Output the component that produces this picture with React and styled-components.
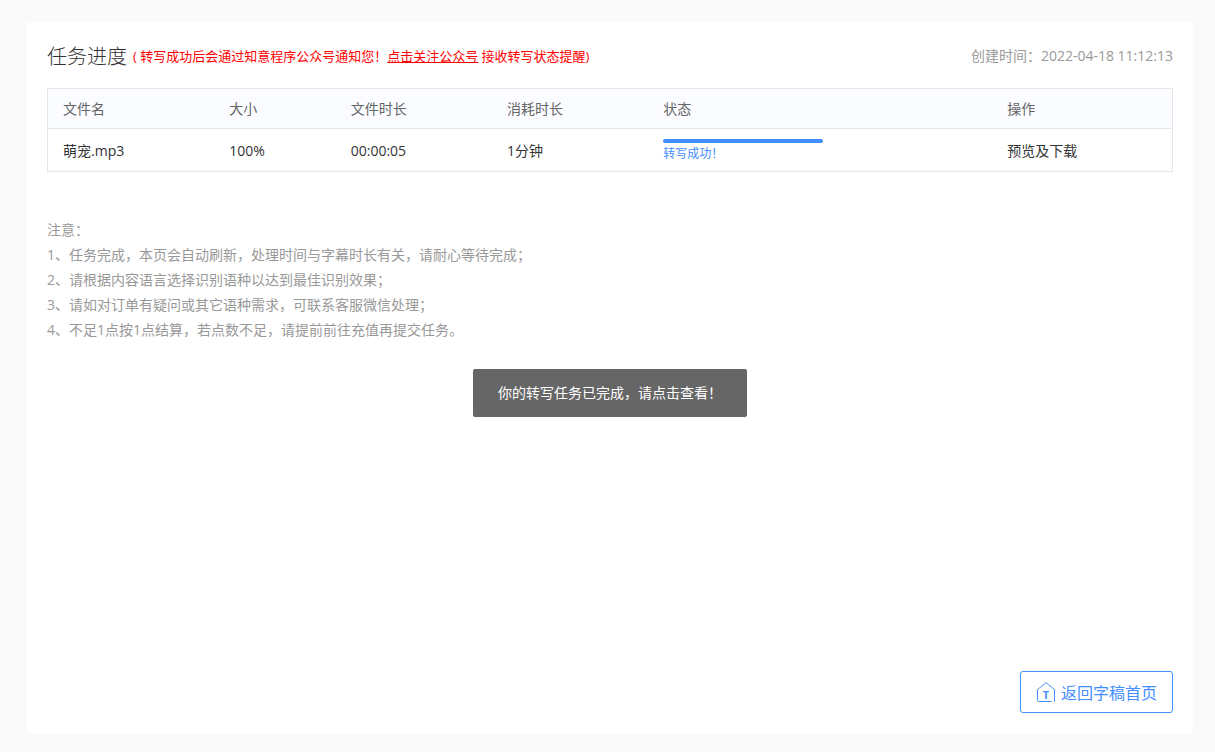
import React from 'react'
import styled, { createGlobalStyle } from 'styled-components';

const columns = [
    { title: '文件名', width: '14.8%' },
    { title: '大小', width: '10.8%' },
    { title: '文件时长', width: '13.9%' },
    { title: '消耗时长', width: '13.9%' },
    { title: '状态', width: '30.6%' },
    { title: '操作', width: '16%' },
];

const files = [
    { name: '萌宠.mp3', size: '100%', duration: '00:00:05', cost: '1分钟', progress: 100, status: '转写成功！' },
];

const notes = [
    '1、任务完成，本页会自动刷新，处理时间与字幕时长有关，请耐心等待完成；',
    '2、请根据内容语言选择识别语种以达到最佳识别效果；',
    '3、请如对订单有疑问或其它语种需求，可联系客服微信处理；',
    '4、不足1点按1点结算，若点数不足，请提前前往充值再提交任务。',
];

function HomeIcon() {
    return (
        <svg width="18" height="20" viewBox="0 0 18 20" fill="none" stroke="currentColor" aria-hidden="true">
            <path d="M14.5 19.5h-13a1 1 0 0 1-1-1V7.6L9 .7l8.5 6.9V20" />
            <text x="9" y="17" textAnchor="middle" fontSize="11" fontWeight="700" fill="currentColor" stroke="none">T</text>
        </svg>
    )
}

function App() {
  return (
    <Page>
        <GlobalStyle />
        <Card>
            <Header>
                <Title>任务进度</Title>
                <Tip>
                    ( 转写成功后会通过知意程序公众号通知您！<a href="#follow">点击关注公众号</a> 接收转写状态提醒)
                </Tip>
                <Created>创建时间：2022-04-18 11:12:13</Created>
            </Header>
            <Table>
                <colgroup>
                    {columns.map((c) => <Col key={c.title} $width={c.width} />)}
                </colgroup>
                <thead>
                    <tr>
                        {columns.map((c) => <HeadCell key={c.title} scope="col">{c.title}</HeadCell>)}
                    </tr>
                </thead>
                <tbody>
                    {files.map((f) => (
                        <tr key={f.name}>
                            <Cell>{f.name}</Cell>
                            <Cell>{f.size}</Cell>
                            <Cell>{f.duration}</Cell>
                            <Cell>{f.cost}</Cell>
                            <Cell>
                                <Track>
                                    <Bar style={{ width: `${f.progress}%` }} />
                                </Track>
                                <Status>{f.status}</Status>
                            </Cell>
                            <Cell><a href="#preview">预览及下载</a></Cell>
                        </tr>
                    ))}
                </tbody>
            </Table>
            <Notes>
                <p>注意：</p>
                {notes.map((n) => <p key={n}>{n}</p>)}
            </Notes>
            <BackLink href="#home">
                <HomeIcon />
                返回字稿首页
            </BackLink>
            <Toast role="status">你的转写任务已完成，请点击查看！</Toast>
        </Card>
    </Page>
  )
}

// Styles

const GlobalStyle = createGlobalStyle`
    * {
        box-sizing: border-box;
    }
    body {
        margin: 0;
        background-color: #fafafa;
        color: #333;
        font-family: "Open Sans", "Noto Sans CJK SC", sans-serif;
        font-size: 14px;
    }
    p, h1 {
        margin: 0;
    }
    a {
        color: inherit;
        text-decoration: none;
    }
`;

const Page = styled.div`
    display: flex;
    min-height: 100vh;
    padding: 22px 22px 19px 27px;
`;

const Card = styled.main`
    position: relative;
    flex: 1;
    display: flex;
    flex-direction: column;
    padding: 0 20px 20px;
    background-color: white;
`;

const Header = styled.header`
    display: flex;
    align-items: center;
    height: 66px;
`;

const Title = styled.h1`
    font-size: 20px;
    font-weight: 300;
`;

const Tip = styled.p`
    margin-left: 6px;
    color: #f00;
    font-size: 13px;

    a {
        text-decoration: underline;
    }
`;

const Created = styled.p`
    margin-left: auto;
    color: #999;
`;

const Table = styled.table`
    width: 100%;
    table-layout: fixed;
    border: 1px solid #e6e6e6;
    border-spacing: 0;
`;

const Col = styled.col`
    width: ${(props) => props.$width};
`;

const HeadCell = styled.th`
    height: 40px;
    padding: 0 15px 2px;
    border-bottom: 1px solid #e6e6e6;
    background-color: #fafcff;
    color: #666;
    font-weight: 400;
    text-align: left;
`;

const Cell = styled.td`
    height: 42px;
    padding: 0 15px;
`;

const Track = styled.div`
    width: 160px;
    height: 4px;
    margin-top: 4px;
    border-radius: 2px;
    background-color: #e6e6e6;
`;

const Bar = styled.div`
    height: 100%;
    border-radius: 2px;
    background-color: #448fff;
`;

const Status = styled.p`
    color: #448fff;
    font-size: 12px;
    line-height: 22px;
`;

const Notes = styled.section`
    margin-top: 45px;
    color: #999;
    line-height: 25px;
`;

const BackLink = styled.a`
    display: flex;
    align-items: center;
    align-self: flex-end;
    gap: 6px;
    height: 42px;
    margin-top: auto;
    padding: 0 15px 0 16px;
    border: 1px solid #448fff;
    border-radius: 3px;
    color: #448fff;
    font-size: 16px;
`;

const Toast = styled.div`
    position: absolute;
    top: 347px;
    left: 50%;
    transform: translateX(-50%);
    padding: 12px 25px;
    border-radius: 2px;
    background-color: #666;
    color: white;
    line-height: 24px;
    white-space: nowrap;
`;

export default App
